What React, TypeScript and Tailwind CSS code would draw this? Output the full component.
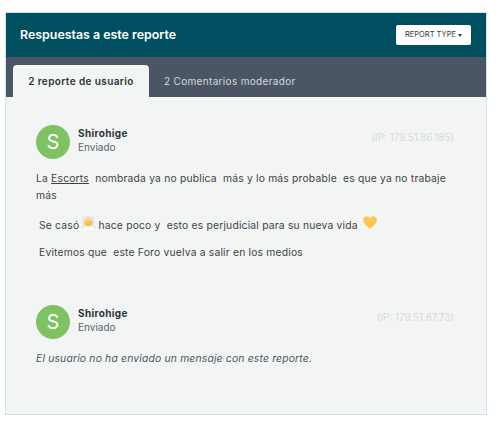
import React from "react";

type ReportProps = {
  name: string;
  ip: string;
  children: React.ReactNode;
};

// Green circle + name row shared by both reports
function Report({ name, ip, children }: ReportProps) {
  return (
    <div className="flex flex-col">
      <div className="flex items-center justify-between">
        <div className="flex items-center gap-[8px]">
          <div className="flex h-[34px] w-[34px] items-center justify-center rounded-full bg-[#7fc263] text-[20px] text-white">
            {name.charAt(0)}
          </div>
          <div className="mb-[4px] flex flex-col">
            <span className="text-[10px] leading-[14px] font-bold tracking-[0.35px] text-[#2b3238]">{name}</span>
            <span className="text-[10px] leading-[14px] tracking-normal text-[#55666e]">Enviado</span>
          </div>
        </div>
        <span className="mb-[11px] text-[9.900px] leading-[14px] tracking-normal text-[#d6d9db]">{ip}</span>
      </div>
      {children}
    </div>
  );
}

function HairEmoji() {
  return (
    <svg viewBox="0 0 13 14" className="inline-block h-[14px] w-[13px] align-[-1px]">
      <rect width="13" height="14" rx="2" fill="#e9ebe9" />
      <path d="M1 14c0-3 2.500-4 5.500-4s5.500 1 5.500 4z" fill="#ffffff" />
      <circle cx="6.500" cy="6.500" r="4" fill="#fcc14f" />
      <path d="M2.300 5.500C2.800 2 4.500 1 6.500 1s3.700 1 4.200 4.500C9 4.300 4 4.300 2.300 5.500z" fill="#f3d9a4" />
    </svg>
  );
}

function HeartEmoji() {
  return (
    <svg viewBox="0 0 14 13" className="ml-[2px] inline-block h-[13px] w-[14px] align-[0px]">
      <path
        d="M7 12.800C3.500 10 .2 7.500.2 4 .2 1.800 1.900.2 3.800.2 5.200.2 6.300 1 7 2.200 7.700 1 8.800.2 10.200.2c1.900 0 3.600 1.600 3.600 3.800 0 3.500-3.300 6-6.800 8.800z"
        fill="#fdc653"
      />
    </svg>
  );
}

export default function App() {
  return (
    <div className="h-[427px] w-[500px] bg-white pt-[12px] pl-[5px] font-['Inter',sans-serif]">
      <div className="flex h-[403px] w-[482px] flex-col border border-[#cfe3ec] bg-[#f3f5f5]">
        <div className="flex h-[44px] items-center justify-between bg-[#004f61] pr-[15px] pl-[14px]">
          <h2 className="text-[12.400px] font-semibold text-white">Respuestas a este reporte</h2>
          <button className="flex h-[20px] w-[75px] items-center justify-center gap-[2px] rounded-[2px] bg-white text-[7.500px] text-[#333a40]">
            REPORT TYPE
            <span className="h-0 w-0 border-x-[2.500px] border-t-[3px] border-x-transparent border-t-[#333a40]" />
          </button>
        </div>
        <div className="flex h-[40px] items-end gap-[15px] bg-[#4b5563] pl-[7px]">
          <div className="flex h-[32px] w-[136px] items-center justify-center rounded-t-[4px] bg-[#f3f5f5] text-[10px] font-semibold tracking-[0.4px] text-[#2b3238]">
            2 reporte de usuario
          </div>
          <div className="flex h-[32px] items-center text-[10px] tracking-[0.33px] text-[#d5d9de]">
            2 Comentarios moderador
          </div>
        </div>
        <div className="flex flex-col gap-[44px] pt-[28px] pr-[32px] pl-[30px] text-[10.300px] leading-[17px] tracking-[0.2px] text-[#3c4347]">
          <Report name="Shirohige" ip="(IP: 179.51.86.185)">
            <p className="mt-[11px]">
              La <span className="underline">Escorts</span>&nbsp; nombrada ya no publica&nbsp; más y lo más probable&nbsp; es que ya no trabaje más
            </p>
            <p className="mt-[12px] pl-[3px]">
              Se casó <HairEmoji /> hace poco y&nbsp; esto es perjudicial para su nueva vida <HeartEmoji />
            </p>
            <p className="mt-[10px] pl-[3px]">Evitemos que&nbsp; este Foro vuelva a salir en los medios</p>
          </Report>
          <Report name="Shirohige" ip="(IP: 179.51.87.73)">
            <p className="mt-[11px] text-[#46565e] italic">El usuario no ha enviado un mensaje con este reporte.</p>
          </Report>
        </div>
      </div>
    </div>
  );
}
